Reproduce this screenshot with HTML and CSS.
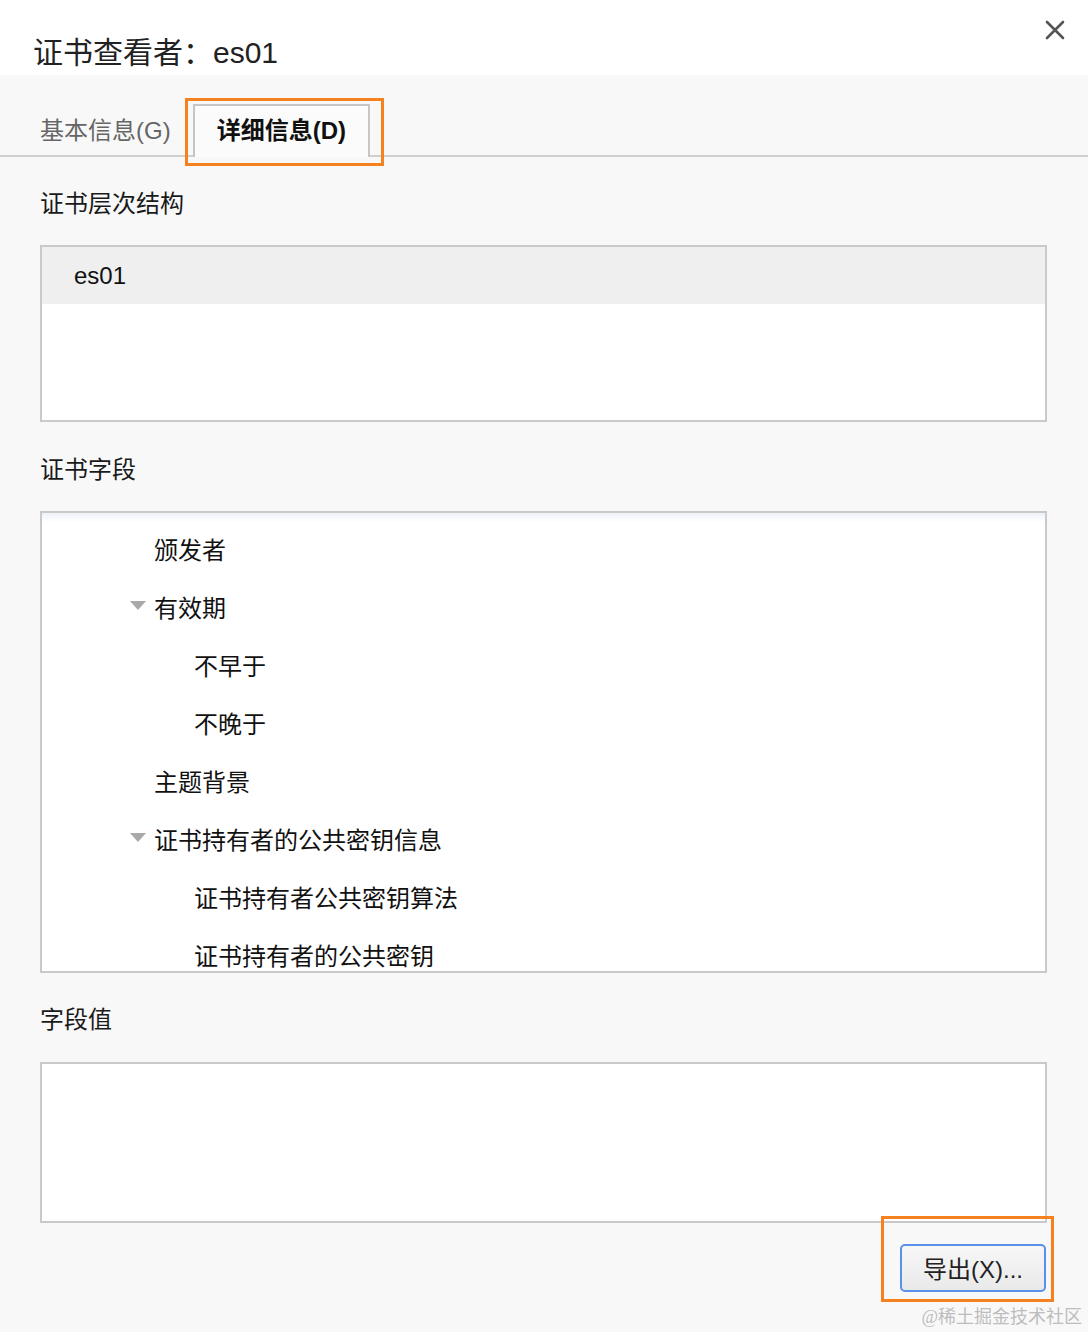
FILE: index.html
```html
<!DOCTYPE html>
<html lang="zh-CN">
<head>
<meta charset="utf-8">
<title>证书查看者：es01</title>
<link rel="stylesheet" href="styles.css">
</head>
<body>
<div class="dialog">
  <header class="header">
    <h1 class="title">证书查看者：es01</h1>
    <button class="close" aria-label="关闭">
      <svg width="20" height="20" viewBox="0 0 20 20"><path d="M2 2 L18 18 M18 2 L2 18" stroke="#555" stroke-width="2.6" stroke-linecap="round"/></svg>
    </button>
  </header>
  <nav class="tabs">
    <div class="tab">基本信息(G)</div>
    <div class="tab tab-active">详细信息(D)<span class="highlight hl-tab"></span></div>
  </nav>
  <main class="content">
    <div class="label">证书层次结构</div>
    <div class="box box-hier">
      <div class="hier-row">es01</div>
    </div>
    <div class="label label-gap">证书字段</div>
    <div class="box box-fields">
      <div class="row lvl1">颁发者</div>
      <div class="row lvl1 has-arrow"><span class="arrow"></span>有效期</div>
      <div class="row lvl2">不早于</div>
      <div class="row lvl2">不晚于</div>
      <div class="row lvl1">主题背景</div>
      <div class="row lvl1 has-arrow"><span class="arrow"></span>证书持有者的公共密钥信息</div>
      <div class="row lvl2">证书持有者公共密钥算法</div>
      <div class="row lvl2">证书持有者的公共密钥</div>
    </div>
    <div class="label label-gap2">字段值</div>
    <div class="box box-value"></div>
    <div class="actions">
      <button class="export">导出(X)...<span class="highlight hl-btn"></span></button>
    </div>
  </main>
  <div class="watermark">@稀土掘金技术社区</div>
</div>
</body>
</html>
```
FILE: styles.css
```css
* { box-sizing: border-box; }
html, body {
  margin: 0;
  padding: 0;
}
body {
  width: 1088px;
  height: 1332px;
  overflow: hidden;
  background: #f8f8f8;
  font-family: "Liberation Sans", "Noto Sans CJK SC", sans-serif;
  color: #1a1a1a;
}
.dialog {
  position: relative;
  height: 1332px;
}
.header {
  height: 75px;
  background: #ffffff;
  display: flex;
  justify-content: space-between;
  align-items: flex-start;
  padding: 36px 0 0 33px;
}
.title {
  margin: 0;
  font-weight: normal;
  font-size: 30px;
  line-height: 34px;
  color: #222;
}
.close {
  border: 0;
  background: none;
  padding: 0;
  margin: -16px 23px 0 0;
  width: 20px;
  height: 20px;
  cursor: pointer;
}
.close svg { display: block; }
.tabs {
  height: 82px;
  display: flex;
  align-items: flex-end;
  padding-left: 40px;
  border-bottom: 2px solid #cfcfcf;
}
.tab {
  font-size: 24px;
  line-height: 30px;
  color: #666666;
  padding-bottom: 9px;
  margin-right: 22px;
  white-space: nowrap;
}
.tab-active {
  position: relative;
  color: #111;
  font-weight: bold;
  height: 53px;
  margin-right: 0;
  margin-bottom: -2px;
  padding: 10px 22px 0;
  border: 2px solid #c6c6c6;
  border-bottom: 0;
  background: #fbfbfb;
}
.highlight {
  position: absolute;
  border: 3px solid #f5821f;
  pointer-events: none;
}
.hl-tab {
  left: -10px;
  top: -8px;
  width: 199px;
  height: 68px;
}
.content {
  padding: 0 41px 0 40px;
}
.label {
  font-size: 24px;
  line-height: 30px;
  margin-top: 32px;
  color: #1a1a1a;
}
.label-gap { margin-top: 33px; }
.label-gap2 { margin-top: 32px; }
.box {
  margin-top: 26px;
  border: 2px solid #c9c9c9;
  background: #ffffff;
  overflow: hidden;
}
.box-hier { height: 177px; }
.hier-row {
  height: 57px;
  background: #efefef;
  font-size: 24px;
  line-height: 57px;
  padding-left: 32px;
  color: #111;
}
.box-fields {
  height: 462px;
  padding-top: 6px;
  background: linear-gradient(#edf1f9 0, #ffffff 9px, #ffffff 100%);
}
.row {
  height: 58px;
  display: flex;
  align-items: center;
  font-size: 24px;
  color: #111;
  white-space: nowrap;
}
.lvl1 { padding-left: 112px; }
.lvl2 { padding-left: 152px; }
.has-arrow { padding-left: 88px; }
.arrow {
  width: 0;
  height: 0;
  border-left: 8px solid transparent;
  border-right: 8px solid transparent;
  border-top: 9px solid #a9a9a9;
  margin-right: 8px;
  margin-top: -2px;
}
.box-value {
  margin-top: 27px;
  height: 161px;
}
.actions {
  display: flex;
  justify-content: flex-end;
  margin-top: 21px;
  padding-right: 1px;
}
.export {
  position: relative;
  width: 146px;
  height: 48px;
  border: 2px solid #5b90ea;
  border-radius: 5px;
  background: linear-gradient(#f7f7f7, #e9e9e9);
  font-family: "Liberation Sans", "Noto Sans CJK SC", sans-serif;
  font-size: 24px;
  color: #222;
  padding: 0 0 2px;
  cursor: pointer;
}
.hl-btn {
  left: -21px;
  top: -30px;
  width: 173px;
  height: 86px;
}
.watermark {
  position: absolute;
  right: 6px;
  bottom: 4px;
  font-size: 18px;
  line-height: 22px;
  color: #bdbdbd;
  font-family: "Liberation Serif", "Noto Sans CJK SC", serif;
}
```
